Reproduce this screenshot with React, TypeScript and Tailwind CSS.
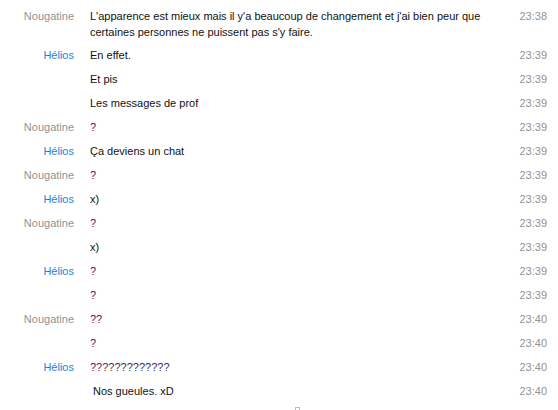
import React from "react";

type Msg = { name?: "Nougatine" | "Hélios"; text: string; time: string; indent?: boolean };

const msgs: Msg[] = [
  { name: "Nougatine", text: "L'apparence est mieux mais il y'a beaucoup de changement et j'ai bien peur que certaines personnes ne puissent pas s'y faire.", time: "23:38" },
  { name: "Hélios", text: "En effet.", time: "23:39" },
  { text: "Et pis", time: "23:39" },
  { text: "Les messages de prof", time: "23:39" },
  { name: "Nougatine", text: "?", time: "23:39" },
  { name: "Hélios", text: "Ça deviens un chat", time: "23:39" },
  { name: "Nougatine", text: "?", time: "23:39" },
  { name: "Hélios", text: "x)", time: "23:39" },
  { name: "Nougatine", text: "?", time: "23:39" },
  { text: "x)", time: "23:39" },
  { name: "Hélios", text: "?", time: "23:39" },
  { text: "?", time: "23:39" },
  { name: "Nougatine", text: "??", time: "23:40" },
  { text: "?", time: "23:40" },
  { name: "Hélios", text: "?????????????", time: "23:40" },
  { text: "Nos gueules. xD", time: "23:40", indent: true },
];

function Text({ t }: { t: string }) {
  const q = /^\?+$/.test(t);
  return <span className={q ? "text-[#4a1e66]" : "text-[#111111]"}>{t}</span>;
}

export default function App() {
  return (
    <div
      className="relative w-[558px] h-[410px] overflow-hidden bg-white text-[11px] leading-[16px]"
      style={{ fontFamily: '"Liberation Sans", Arial, sans-serif' }}
    >
      <div className="flex flex-col pt-[4px]">
        {msgs.map((m, i) => (
          <div key={i} className={`flex ${i === 0 ? "pt-[4px] pb-[3px]" : "py-[4px]"}`}>
            <div
              className={`w-[74px] shrink-0 text-right ${m.name === "Hélios" ? "text-[#1f7fd6]" : "text-[#929292]"}`}
            >
              {m.name ?? ""}
            </div>
            <div className={`flex-1 ml-[16px] ${m.indent ? "pl-[3px]" : ""}`}>
              <Text t={m.text} />
            </div>
            <div className="w-[40px] shrink-0 ml-[24px] mr-[11px] text-right text-[#929292]">{m.time}</div>
          </div>
        ))}
      </div>
      <div className="absolute left-[295px] top-[407px] w-[5px] h-[4px] border border-b-0 border-[#9cc3de] rounded-t-[1px]" />
    </div>
  );
}
